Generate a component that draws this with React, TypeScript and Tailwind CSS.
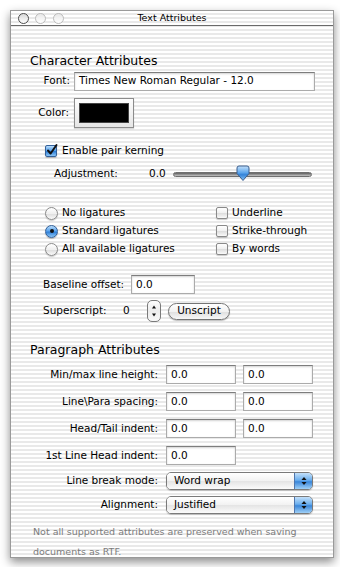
import React from 'react';

// Aqua-style "Text Attributes" inspector panel

const stripes =
  'bg-[repeating-linear-gradient(180deg,#ffffff_0px,#ffffff_2px,#e9e9e9_2px,#e9e9e9_4px)]';

function TextField({ value, className }: { value: string; className: string }) {
  return (
    <div
      className={`h-[19px] bg-white border border-[#ababab] border-t-[#7d7d7d] shadow-[inset_0_1px_2px_rgba(0,0,0,0.18)] flex items-center pl-[4px] text-black ${className}`}
    >
      {value}
    </div>
  );
}

function Checkbox({ checked }: { checked?: boolean }) {
  if (checked) {
    return (
      <div className="relative w-[12px] h-[12px] rounded-[2px] border border-[#34619a] bg-[linear-gradient(180deg,#b9dcfb_0%,#5aa3ec_45%,#2f7fd8_55%,#8cc6f6_100%)] shadow-[0_1px_1px_rgba(0,0,0,0.25)]">
        <svg width="14" height="14" viewBox="0 0 14 14" className="absolute left-[-1px] top-[-3px]">
          <path d="M3 7.5 L5.6 10.5 L11.5 2" fill="none" stroke="#111" strokeWidth="2" strokeLinecap="round" strokeLinejoin="round" />
        </svg>
      </div>
    );
  }
  return (
    <div className="w-[12px] h-[12px] rounded-[2px] border border-[#8a8a8a] bg-[linear-gradient(180deg,#ffffff_0%,#f0f0f0_50%,#dcdcdc_51%,#fafafa_100%)] shadow-[0_1px_1px_rgba(0,0,0,0.2)]" />
  );
}

function Radio({ checked }: { checked?: boolean }) {
  if (checked) {
    return (
      <div className="w-[13px] h-[13px] rounded-full border border-[#34619a] bg-[linear-gradient(180deg,#b9dcfb_0%,#5aa3ec_45%,#2f7fd8_55%,#8cc6f6_100%)] flex items-center justify-center shadow-[0_1px_1px_rgba(0,0,0,0.25)]">
        <div className="w-[4px] h-[4px] rounded-full bg-[#111]" />
      </div>
    );
  }
  return (
    <div className="w-[13px] h-[13px] rounded-full border border-[#8a8a8a] bg-[linear-gradient(180deg,#ffffff_0%,#f0f0f0_50%,#dcdcdc_51%,#fafafa_100%)] shadow-[0_1px_1px_rgba(0,0,0,0.2)]" />
  );
}

function PopUp({ value }: { value: string }) {
  return (
    <div className="flex h-[18px] w-[147px] rounded-[5px] border border-[#7a7a7a] overflow-hidden shadow-[0_1px_1px_rgba(0,0,0,0.2)]">
      <div className="flex-1 flex items-center pl-[7px] bg-[linear-gradient(180deg,#ffffff_0%,#f2f2f2_50%,#e4e4e4_51%,#fbfbfb_100%)]">
        {value}
      </div>
      <div className="w-[18px] border-l border-[#4f76ad] bg-[linear-gradient(180deg,#c3e0fa_0%,#6aaeee_45%,#3a86d9_55%,#9fd0f7_100%)] flex items-center justify-center">
        <svg width="8" height="12" viewBox="0 0 8 12">
          <path d="M1.5 5 L4 2 L6.5 5 Z" fill="#111" />
          <path d="M1.5 7 L4 10 L6.5 7 Z" fill="#111" />
        </svg>
      </div>
    </div>
  );
}

function Stepper() {
  return (
    <svg width="14" height="22" viewBox="0 0 14 22">
      <defs>
        <linearGradient id="stepGrad" x1="0" y1="0" x2="0" y2="1">
          <stop offset="0" stopColor="#ffffff" />
          <stop offset="0.5" stopColor="#ececec" />
          <stop offset="1" stopColor="#f8f8f8" />
        </linearGradient>
      </defs>
      <rect x="0.5" y="0.5" width="13" height="21" rx="4.5" fill="url(#stepGrad)" stroke="#7a7a7a" />
      <path d="M5 8.5 L7 5.5 L9 8.5 Z" fill="#111" />
      <path d="M5 13.5 L7 16.5 L9 13.5 Z" fill="#111" />
    </svg>
  );
}

function Slider() {
  return (
    <div className="relative w-[139px] h-[16px] flex items-center">
      <div className="w-full h-[5px] rounded-full bg-[linear-gradient(180deg,#5f5f5f_0%,#9a9a9a_60%,#c4c4c4_100%)] border border-[#6f6f6f]" />
      <svg width="14" height="17" viewBox="0 0 14 17" className="absolute left-[63px] top-[-1px]">
        <defs>
          <linearGradient id="thumbGrad" x1="0" y1="0" x2="0" y2="1">
            <stop offset="0" stopColor="#c6e2fb" />
            <stop offset="0.45" stopColor="#5ea6ec" />
            <stop offset="0.6" stopColor="#3483d9" />
            <stop offset="1" stopColor="#86c2f4" />
          </linearGradient>
        </defs>
        <path d="M1 3 Q1 1 3 1 H11 Q13 1 13 3 V8.5 L7 15.5 L1 8.5 Z" fill="url(#thumbGrad)" stroke="#3b5f8f" strokeWidth="1" />
      </svg>
    </div>
  );
}

export default function App() {
  return (
    <div className="min-h-screen bg-white pt-[10px] pl-[10px] font-['DejaVu_Sans',sans-serif] text-[10.5px] text-black">
      <div className={`w-[324px] h-[548px] border border-[#9a9a9a] shadow-[0_4px_9px_rgba(0,0,0,0.45)] flex flex-col ${stripes}`}>
        {/* Title bar */}
        <div className="h-[16px] border-b border-[#6a6a6a] grid grid-cols-[1fr_auto_1fr] items-center">
          <div className="flex items-center pl-[7px]">
            <div className="w-[11px] h-[11px] rounded-full border-[1.5px] border-[#4d4d4d] bg-[linear-gradient(180deg,#d8d8d8,#ffffff)]" />
            <div className="ml-[6px] w-[11px] h-[11px] rounded-full border border-[#bcbcbc] bg-[linear-gradient(180deg,#e8e8e8,#ffffff)]" />
            <div className="ml-[7px] w-[11px] h-[11px] rounded-full border border-[#bcbcbc] bg-[linear-gradient(180deg,#e8e8e8,#ffffff)]" />
          </div>
          <div className="text-[9.5px] text-black">Text Attributes</div>
          <div />
        </div>

        {/* Character Attributes */}
        <div className="mt-[27px] h-[16px] flex items-center pl-[19px] text-[12.5px]">Character Attributes</div>

        <div className="mt-[3px] h-[18px] flex items-center">
          <div className="w-[59px] text-right">Font:</div>
          <TextField value="Times New Roman Regular - 12.0" className="ml-[4px] w-[241px] h-[18px] text-[#3c3c3c]" />
        </div>

        <div className="mt-[8px] h-[30px] flex items-center">
          <div className="w-[58px] text-right">Color:</div>
          <div className="ml-[5px] w-[60px] h-[30px] border border-[#8c8c8c] bg-[linear-gradient(180deg,#fdfdfd,#e6e6e6)] p-[4px] shadow-[0_1px_1px_rgba(0,0,0,0.15)]">
            <div className="w-full h-full bg-black border border-[#444]" />
          </div>
        </div>

        <div className="mt-[15px] h-[16px] flex items-center pl-[34px]">
          <Checkbox checked />
          <span className="ml-[5px]">Enable pair kerning</span>
        </div>

        <div className="mt-[7px] h-[16px] flex items-center pl-[43px]">
          <div className="w-[95px]">Adjustment:</div>
          <div className="w-[24px]">0.0</div>
          <Slider />
        </div>

        {/* Ligatures & decorations */}
        <div className="mt-[23px] flex flex-col gap-[2px] pl-[34px]">
          <div className="h-[16px] flex items-center">
            <div className="w-[171px] flex items-center">
              <Radio />
              <span className="ml-[4px]">No ligatures</span>
            </div>
            <Checkbox />
            <span className="ml-[4px]">Underline</span>
          </div>
          <div className="h-[16px] flex items-center">
            <div className="w-[171px] flex items-center">
              <Radio checked />
              <span className="ml-[4px]">Standard ligatures</span>
            </div>
            <Checkbox />
            <span className="ml-[4px]">Strike-through</span>
          </div>
          <div className="h-[16px] flex items-center">
            <div className="w-[171px] flex items-center">
              <Radio />
              <span className="ml-[4px]">All available ligatures</span>
            </div>
            <Checkbox />
            <span className="ml-[4px]">By words</span>
          </div>
        </div>

        <div className="mt-[18px] h-[19px] flex items-center pl-[32px]">
          <div className="w-[88px]">Baseline offset:</div>
          <TextField value="0.0" className="w-[64px]" />
        </div>

        <div className="mt-[6px] h-[22px] flex items-center pl-[32px]">
          <div className="w-[80px]">Superscript:</div>
          <div className="w-[24px]">0</div>
          <Stepper />
          <div className="ml-[7px] w-[62px] h-[17px] rounded-full border border-[#747474] bg-[linear-gradient(180deg,#ffffff_0%,#f1f1f1_50%,#dedede_51%,#f7f7f7_100%)] shadow-[0_1px_1px_rgba(0,0,0,0.25)] flex items-center justify-center">
            Unscript
          </div>
        </div>

        {/* Paragraph Attributes */}
        <div className="mt-[20px] h-[16px] flex items-center pl-[19px] text-[12.5px]">Paragraph Attributes</div>

        <div className="mt-[7px] h-[19px] flex items-center">
          <div className="w-[147px] text-right">Min/max line height:</div>
          <TextField value="0.0" className="ml-[8px] w-[70px]" />
          <TextField value="0.0" className="ml-[7px] w-[70px]" />
        </div>

        <div className="mt-[8px] h-[19px] flex items-center">
          <div className="w-[147px] text-right">Line\Para spacing:</div>
          <TextField value="0.0" className="ml-[8px] w-[70px]" />
          <TextField value="0.0" className="ml-[7px] w-[70px]" />
        </div>

        <div className="mt-[8px] h-[19px] flex items-center">
          <div className="w-[147px] text-right">Head/Tail indent:</div>
          <TextField value="0.0" className="ml-[8px] w-[70px]" />
          <TextField value="0.0" className="ml-[7px] w-[70px]" />
        </div>

        <div className="mt-[8px] h-[19px] flex items-center">
          <div className="w-[147px] text-right">1st Line Head indent:</div>
          <TextField value="0.0" className="ml-[8px] w-[70px]" />
        </div>

        <div className="mt-[7px] h-[18px] flex items-center">
          <div className="w-[147px] text-right">Line break mode:</div>
          <div className="ml-[8px]">
            <PopUp value="Word wrap" />
          </div>
        </div>

        <div className="mt-[6px] h-[18px] flex items-center">
          <div className="w-[147px] text-right">Alignment:</div>
          <div className="ml-[8px]">
            <PopUp value="Justified" />
          </div>
        </div>

        <div className="mt-[8px] pl-[22px] text-[9.5px] leading-[20px] text-[#7c7c7c]">
          Not all supported attributes are preserved when saving
          <br />
          documents as RTF.
        </div>
      </div>
    </div>
  );
}
